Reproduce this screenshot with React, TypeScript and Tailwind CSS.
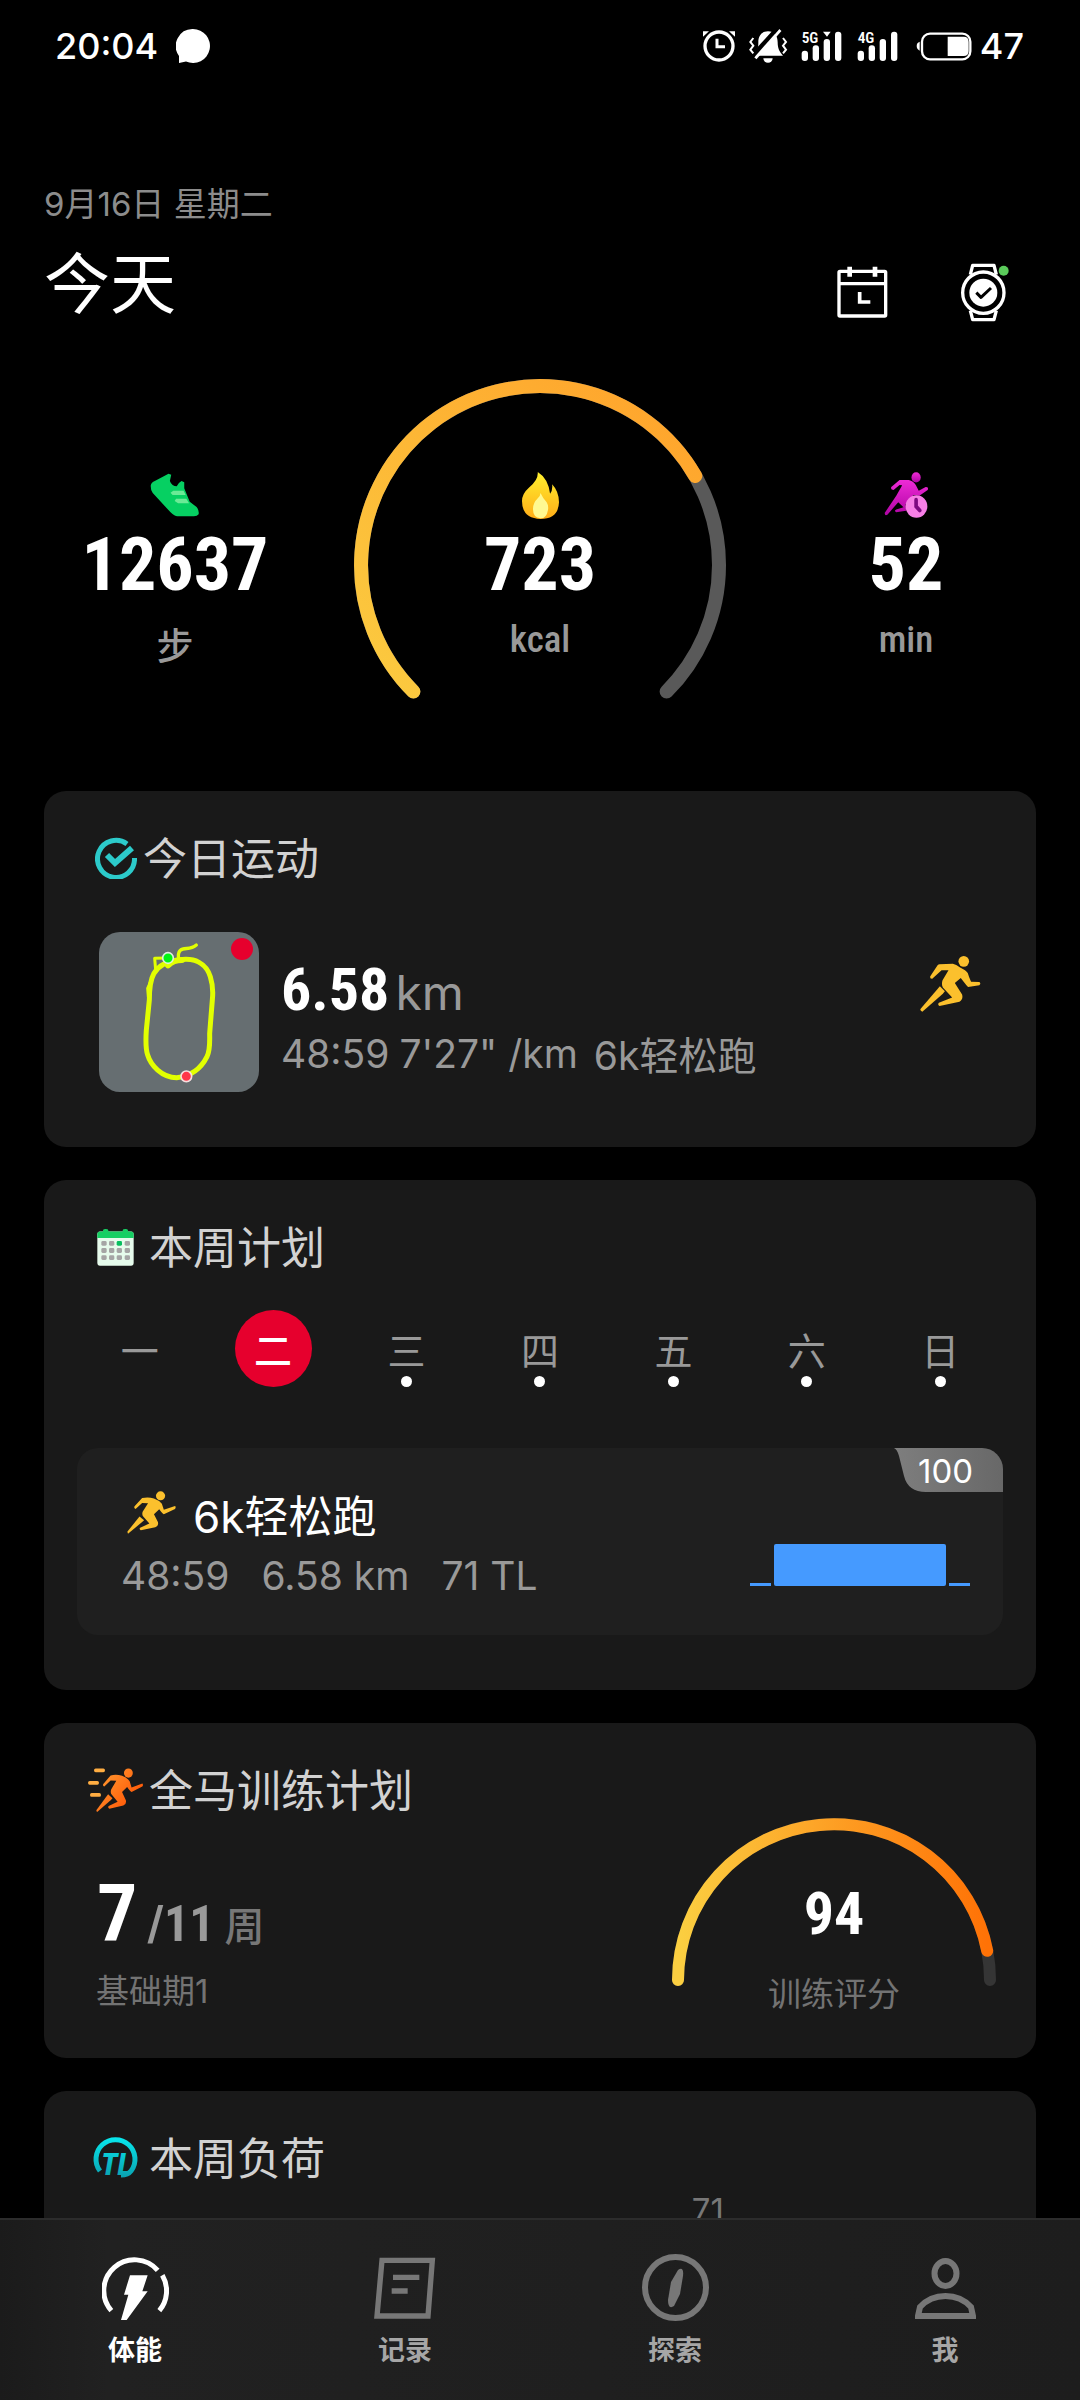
import React from 'react'

const NUM = "font-['Roboto_Condensed',Roboto,sans-serif] font-bold"

function StatusBar() {
  return (
    <div className="flex h-[92px] shrink-0 items-center justify-between pr-[56px] pl-[55px] text-[36px] leading-[48px] font-medium">
      <div className="flex items-center gap-[18px]">
        <span>20:04</span>
        <svg width="34" height="34" viewBox="0 0 34 34" fill="#fff" aria-label="消息">
          <path d="M17 0a17 17 0 1 1-7 32.500L3 34V27A17 17 0 0 1 17 0Z" />
        </svg>
      </div>
      <div className="flex items-center">
        <svg width="32" height="36" viewBox="72 52 96 108" fill="none" stroke="#fff" aria-label="闹钟">
          <circle cx="120" cy="106" r="42" strokeWidth="10" />
          <path d="M114 84V108H138" strokeWidth="9" />
          <path d="M72 78V62H90ZM168 78V62H150Z" fill="#fff" stroke="none" />
        </svg>
        <svg className="ml-[13px]" width="40" height="36" viewBox="207 52 120 108" fill="none" stroke="#fff" strokeWidth="7" aria-label="静音">
          <path d="M267 62C286 62 296 76 296 95C296 112 300 122 312 135H222C236 122 238 112 238 95C238 76 248 62 267 62Z" fill="#fff" stroke="none" />
          <path d="M253 143H281A14 13 0 0 1 253 143Z" fill="#fff" stroke="none" />
          <path d="M300 46L216 138" stroke="#000" strokeWidth="10" />
          <path d="M304 58L229 143" strokeWidth="9" />
          <path d="M297 54L222 139" stroke="#000" strokeWidth="7" />
          <path d="M223 82L214 94L223 105L214 117L223 128M312 82L321 94L312 105L321 117L312 128" strokeWidth="6" />
        </svg>
        <Signal label="5G" marker />
        <Signal label="4G" />
        <svg className="ml-[18px]" width="56" height="36" viewBox="709 52 168 108" aria-label="电量">
          <rect x="727" y="69" width="145" height="77" rx="24" fill="none" stroke="#fff" strokeWidth="7" />
          <path d="M804 78H852Q867 78 867 94V121Q867 136 852 136H804Z" fill="#fff" />
          <path d="M720 93V120Q711 116 711 106Q711 96 720 93Z" fill="#fff" />
        </svg>
        <span className="ml-2">47</span>
      </div>
    </div>
  )
}

function Signal({ label, marker }: { label: string; marker?: boolean }) {
  return (
    <svg className={marker ? 'ml-[13px]' : 'ml-[15px]'} width="41" height="36" viewBox="365 52 123 108" fill="#fff" aria-label={label + '信号'}>
      <rect x="367" y="120" width="19" height="31" rx="9" />
      <rect x="400" y="104" width="19" height="47" rx="9" />
      <rect x="433" y="85" width="19" height="66" rx="9" />
      <rect x="467" y="63" width="19" height="88" rx="9" />
      {marker && <path d="M431 63H454L443 78Z" />}
      <text x="367" y="96" fontSize="46" fontWeight="600" fontFamily="Roboto Condensed, Roboto">{label}</text>
    </svg>
  )
}

function Shoe() {
  return (
    <svg width="50" height="44" viewBox="218 338 73 132" preserveAspectRatio="none">
      <path d="M245 340L249 343L247 362Q250 378 257 378Q260 366 264 362L268 366V384L276 424L286 440Q290 450 289 462Q287 468 282 468H258Q254 468 248 456L222 398Q219 390 219 376Q220 366 225 362Z" fill="#06d062" />
      <path d="M252 391H267L270 404H251L248 397ZM256 415H271L275 429H259L254 422Z" fill="#6bea96" />
    </svg>
  )
}

function Flame() {
  return (
    <svg width="37" height="47" viewBox="758 333 54 141" preserveAspectRatio="none">
      <defs>
        <linearGradient id="flame" x1="0" y1="0" x2="0" y2="1">
          <stop offset="0" stopColor="#fff02e" />
          <stop offset="1" stopColor="#ffac18" />
        </linearGradient>
      </defs>
      <path d="M781 333Q796 352 799 398Q803 388 802 370Q812 392 812 424Q811 474 785 474Q758 472 758 420Q758 398 768 380Q782 358 781 333Z" fill="url(#flame)" />
      <path d="M785 396Q788 410 794 424Q797 434 796 446Q794 472 785 472Q774 470 774 444Q774 426 781 412Q785 404 785 396Z" fill="#fff991" />
    </svg>
  )
}

function ActiveTime() {
  return (
    <svg width="45" height="46" viewBox="71 32 136 128" preserveAspectRatio="none">
      <defs>
        <linearGradient id="active" x1="0" y1="0" x2="0" y2="1">
          <stop offset="0" stopColor="#ee2bd6" />
          <stop offset="1" stopColor="#b004a4" />
        </linearGradient>
      </defs>
      <g fill="url(#active)">
        <circle cx="168" cy="47" r="14" />
        <path d="M118 54H146Q160 57 167 68L176 84L197 74Q207 74 203 82L178 98L160 96L136 122L138 140L108 144Q100 140 108 136L130 130L114 116L82 150Q74 156 73 146L108 98L126 69L118 68L100 82Q90 82 93 74Z" />
      </g>
      <ellipse cx="169" cy="128" rx="33" ry="31" fill="#f77fe6" />
      <path d="M168 109V128L179 139" fill="none" stroke="#7d0a80" strokeWidth="11" strokeLinecap="round" />
    </svg>
  )
}

function Stat({ icon, value, unit, cjk }: { icon: React.ReactNode; value: string; unit: string; cjk?: boolean }) {
  return (
    <div className="flex flex-col items-center pt-[92px]">
      <div className="flex h-12 items-center">{icon}</div>
      <div className={`${NUM} mt-[9px] text-[74px] leading-[74px]`}>{value}</div>
      <div className={`${cjk ? 'leading-[64px]' : 'leading-[48px]'} mt-[14px] font-['Roboto_Condensed','Noto_Sans_CJK_SC',sans-serif] text-[37px] font-medium text-[#999]`}>{unit}</div>
    </div>
  )
}

function Overview() {
  return (
    <section className="grid grid-cols-[1fr_372px_1fr]">
      <div className="pr-1">
        <Stat icon={<Shoe />} value="12637" unit="步" cjk />
      </div>
      <div className="grid">
        <svg className="col-start-1 row-start-1" width="372" height="321" viewBox="0 0 372 321" fill="none" strokeWidth="14" strokeLinecap="round">
          <defs>
            <linearGradient id="ring" x1="0" y1="1" x2="1" y2="0">
              <stop offset="0" stopColor="#fbcb40" />
              <stop offset="1" stopColor="#ffa22b" />
            </linearGradient>
          </defs>
          <path d="M59.400 312.600A179 179 0 1 1 312.600 312.600" stroke="#595959" />
          <path d="M59.400 312.600A179 179 0 1 1 341.300 97" stroke="url(#ring)" />
        </svg>
        <div className="col-start-1 row-start-1">
          <Stat icon={<Flame />} value="723" unit="kcal" />
        </div>
      </div>
      <div className="pl-1.5">
        <Stat icon={<ActiveTime />} value="52" unit="min" />
      </div>
    </section>
  )
}

function CardTitle({ icon, title, tight }: { icon: React.ReactNode; title: string; tight?: boolean }) {
  return (
    <div className="flex h-[62px] items-center pl-[44px]">
      <div className="flex w-[55px] justify-center">{icon}</div>
      <h2 className={`${tight ? 'ml-0' : 'ml-[6px]'} pt-0.5 text-[44px] leading-[64px] text-[#d2d2d2]`}>{title}</h2>
    </div>
  )
}

function Card({ className = '', children }: { className?: string; children: React.ReactNode }) {
  return <section className={`rounded-[22px] bg-[#191919] ${className}`}>{children}</section>
}

function TrackMap() {
  return (
    <svg className="shrink-0 rounded-[21px] bg-[#666e71]" width="160" height="160" viewBox="57 36 480 480" fill="none" stroke="#e2ff00" strokeLinecap="round" strokeLinejoin="round" aria-label="运动轨迹">
      <path d="M296 120C345 112 378 130 391 170C398 192 400 212 397 240L389 340C389 370 391 390 381 410C366 440 340 468 290 473C245 473 212 435 203 405C196 385 197 360 199 330L208 240C208 200 212 178 222 160C238 135 262 122 296 120Z" strokeWidth="15" />
      <path d="M264 136Q280 120 306 120" strokeWidth="18" />
      <path d="M349 75C330 92 312 80 300 92Q293 100 296 118" strokeWidth="10" />
      <path d="M264 114L224 115L227 150L214 180L203 205L205 230" strokeWidth="9" />
      <circle cx="264" cy="114" r="16" fill="#00f514" stroke="#dfeedd" strokeWidth="5" />
      <circle cx="319" cy="469" r="16" fill="#ff3648" stroke="#f5dede" strokeWidth="5" />
      <circle cx="486" cy="87" r="33" fill="#e6002d" stroke="none" />
    </svg>
  )
}

function SprintRunner() {
  return (
    <svg className="mt-6 shrink-0" width="61" height="56" viewBox="181 1376 184 157" preserveAspectRatio="none" fill="#fbc02d">
      <ellipse cx="313" cy="1391" rx="16" ry="15" />
      <path d="M240 1399L280 1398Q290 1400 302 1408Q320 1416 325 1424Q328 1434 335 1448L360 1449Q366 1453 360 1458L326 1463Q320 1458 304 1438L286 1452L308 1484Q312 1498 300 1504L240 1516Q233 1512 238 1507L278 1492L250 1464Q245 1456 249 1444L267 1416H246L218 1440Q210 1440 212 1433L234 1402Q237 1399 240 1399Z" />
      <path d="M241 1461L256 1475L250 1482L188 1532Q180 1530 183 1524Z" />
    </svg>
  )
}

function RunnerShape() {
  return (
    <>
      <ellipse cx="242" cy="720" rx="14" ry="12" />
      <path d="M186 726Q204 722 222 727Q238 732 246 741L252 757L286 747Q290 750 286 755L252 769Q248 768 238 756L222 769L234 790Q237 800 226 804L182 812Q176 809 180 805L208 794L188 774Q185 768 188 762L204 740L186 739L166 755Q160 753 163 748Z" />
      <path d="M178 775L192 785L186 790L143 821L141 816Z" />
    </>
  )
}

function TodayCard() {
  return (
    <Card className="pt-9 pb-[55px]">
      <CardTitle
        tight
        title="今日运动"
        icon={
          <svg width="42" height="42" viewBox="0 0 42 42" fill="none" stroke="#2ccaca">
            <path d="M32 7A18.500 18.500 0 1 0 39.500 21" strokeWidth="5" />
            <path d="M12 18L20 26L37 11" strokeWidth="6" />
          </svg>
        }
      />
      <a href="#activity" className="mt-[43px] flex px-[55px]">
        <TrackMap />
        <div className="ml-[22px] flex-1 pt-7">
          <div className="flex h-[56px] items-baseline leading-[60px]">
            <span className={`${NUM} text-[60px]`}>6.58</span>
            <span className="ml-1.5 text-[48px] text-[#999]">km</span>
          </div>
          <div className="mt-[14px] flex items-start text-[39px] leading-[48px] text-[#999]">
            <span>48:59</span>
            <span className="ml-2.5">7'27" /km</span>
            <span className="ml-4 leading-[52px]">6k轻松跑</span>
          </div>
        </div>
        <SprintRunner />
      </a>
    </Card>
  )
}

function CalendarIcon() {
  return (
    <svg width="37" height="37" viewBox="51 17 111 99" preserveAspectRatio="none">
      <rect x="52" y="24" width="109" height="91" rx="8" fill="#e6fbec" />
      <path d="M52 41V31Q52 24 60 24H69V21Q69 17 77 17Q85 17 85 21V24H128V21Q128 17 136 17Q144 17 144 21V24H153Q161 24 161 31V41Z" fill="#17cf63" />
      {[72, 95, 118, 142].map((x) =>
        [55, 74, 93].map((y) => (
          <rect key={`${x}-${y}`} x={x - 8} y={y - 6} width="16" height="13" rx="4" fill={x === 118 && y === 55 ? '#06bf5f' : '#a5a5a5'} />
        )),
      )}
    </svg>
  )
}

const days = ['一', '二', '三', '四', '五', '六', '日']

function PlanCard() {
  return (
    <Card className="pt-9 pb-[55px]">
      <CardTitle title="本周计划" icon={<CalendarIcon />} />
      <div className="mt-8 grid grid-cols-7 px-[29px]">
        {days.map((d, i) => (
          <button
            key={d}
            className={
              i === 1
                ? 'mx-auto size-[77px] rounded-full bg-[#e6002d] text-[38px] leading-[82px] font-medium text-white'
                : 'relative mx-auto size-[77px] text-[38px] leading-[82px] text-[#999]'
            }
          >
            {d}
            {i > 1 && <span className="absolute bottom-0 left-[33px] size-[11px] rounded-full bg-white" />}
          </button>
        ))}
      </div>
      <a href="#plan" className="relative mx-[33px] mt-[61px] flex items-end justify-between overflow-hidden rounded-[21px] bg-[#1f1f1f] pr-[33px] pl-[44px]">
        <div className="pt-[43px] pb-[37px]">
          <div className="flex text-[44px] leading-[52px]">
            <svg className="mr-[17px] ml-[6px]" width="49" height="43" viewBox="140 707 149 115" preserveAspectRatio="none" fill="#fbc02d">
              <RunnerShape />
            </svg>
            6k轻松跑
          </div>
          <div className="mt-[11px] flex gap-8 text-[39px] leading-[44px] text-[#999]">
            <span>48:59</span>
            <span>6.58 km</span>
            <span>71 TL</span>
          </div>
        </div>
        <div className="flex items-end gap-[3px] pb-[49px]">
          <span className="h-[3px] w-[21px] bg-[#459aff]" />
          <span className="h-[42px] w-[172px] rounded-[2px] bg-[#459aff]" />
          <span className="h-[3px] w-[21px] bg-[#459aff]" />
        </div>
        <div className="absolute top-0 right-0 h-11 w-[109px]">
          <svg className="absolute inset-0" width="109" height="44" viewBox="0 0 109 44">
            <defs>
              <linearGradient id="badge" x1="0" y1="0" x2="1" y2="0">
                <stop offset="0" stopColor="#7e7e7e" />
                <stop offset="1" stopColor="#686868" />
              </linearGradient>
            </defs>
            <path d="M0 0H109V44H32Q14 44 10 28L5 8Q3 1 0 0Z" fill="url(#badge)" />
          </svg>
          <span className="relative block pl-6 text-[33px] leading-[46px]">100</span>
        </div>
      </a>
    </Card>
  )
}

function MarathonIcon() {
  return (
    <svg width="55" height="44" viewBox="24 1427 165 116" preserveAspectRatio="none">
      <defs>
        <linearGradient id="orange" gradientUnits="userSpaceOnUse" x1="150" y1="708" x2="260" y2="821">
          <stop offset="0" stopColor="#ffa035" />
          <stop offset="1" stopColor="#ff4d00" />
        </linearGradient>
      </defs>
      <g transform="matrix(0.952 0 0 1.02 -85.2 706)" fill="url(#orange)">
        <RunnerShape />
      </g>
      <path d="M47 1433H70M29 1466H52M35 1498H58" stroke="#ffad42" strokeWidth="10" strokeLinecap="round" />
    </svg>
  )
}

function MarathonCard() {
  return (
    <Card className="flex justify-between">
      <div className="pt-9 pb-[47px]">
        <CardTitle title="全马训练计划" icon={<MarathonIcon />} />
        <div className="mt-[53px] flex h-[80px] items-baseline pl-[53px] leading-[80px]">
          <span className={`${NUM} text-[80px]`}>7</span>
          <span className={`${NUM} ml-2.5 text-[50px] text-[#999]`}>/11</span>
          <span className="ml-2.5 text-[40px] font-medium text-[#777]">周</span>
        </div>
        <div className="mt-[17px] pl-[52px] text-[33px] leading-10 text-[#737373]">基础期1</div>
      </div>
      <div className="mr-[40px] grid content-start pt-[95px]">
        <svg className="col-start-1 row-start-1" width="324" height="168" viewBox="0 0 324 168" fill="none" strokeWidth="12" strokeLinecap="round">
          <defs>
            <linearGradient id="score" x1="0" y1="0" x2="1" y2="0">
              <stop offset="0" stopColor="#fbcf41" />
              <stop offset="0.450" stopColor="#fda427" />
              <stop offset="1" stopColor="#ff7206" />
            </linearGradient>
          </defs>
          <path d="M6 162A156 156 0 0 1 318 162" stroke="#353535" />
          <path d="M6 162A156 156 0 0 1 315.200 132.800" stroke="url(#score)" />
        </svg>
        <div className="col-start-1 row-start-1 pt-[66px] text-center">
          <div className={`${NUM} text-[60px] leading-[60px]`}>94</div>
          <div className="mt-[30px] text-[33px] leading-10 text-[#737373]">训练评分</div>
        </div>
      </div>
    </Card>
  )
}

function LoadCard() {
  return (
    <Card className="pt-9 pb-[55px]">
      <CardTitle
        title="本周负荷"
        icon={
          <svg className="overflow-visible" width="45" height="42" viewBox="0 0 45 42" fill="none">
            <defs>
              <linearGradient id="load" gradientUnits="userSpaceOnUse" x1="0" y1="0" x2="0" y2="42">
                <stop offset="0" stopColor="#08e8ee" />
                <stop offset="1" stopColor="#0a9fae" />
              </linearGradient>
            </defs>
            <path d="M7 34A19.500 19.500 0 1 1 38 34Q35 38 28 38" stroke="url(#load)" strokeWidth="5" />
            <text x="8" y="38" fontSize="31" fontWeight="800" fontStyle="italic" fontFamily="Roboto Condensed, Roboto" fill="url(#load)">TL</text>
          </svg>
        }
      />
      <div className="ml-[65%] h-[200px] pl-[3px] text-[33px] leading-[42px] text-[#777]">71</div>
    </Card>
  )
}

const tabs = [
  {
    label: '体能',
    icon: (
      <svg width="67" height="67" viewBox="126 70 201 201" fill="none" stroke="#fff" strokeWidth="15">
        <path d="M154 240A92 92 0 0 1 293 119M307 134A92 92 0 0 1 298 240" />
        <path d="M210 134H263L247 182H263L200 268H183L205 192H192Z" fill="#fff" stroke="none" />
      </svg>
    ),
  },
  {
    label: '记录',
    icon: (
      <svg width="62" height="67" viewBox="944 70 186 201" fill="none" stroke="#777" strokeWidth="16">
        <path d="M968 89H1119L1106 256H953Z" />
        <path d="M1001 140H1080M997 181H1045" />
      </svg>
    ),
  },
  {
    label: '探索',
    icon: (
      <svg width="67" height="67" viewBox="0 0 67 67" fill="none" stroke="#777" strokeWidth="6">
        <circle cx="33.500" cy="33.500" r="30.500" />
        <path d="M36 16Q42 12 41 22L38 40L32 52Q26 56 26 46L29 28Z" fill="#777" stroke="none" />
      </svg>
    ),
  },
  {
    label: '我',
    icon: (
      <svg width="61" height="67" viewBox="0 -4 61 67" fill="none" stroke="#777" strokeWidth="6">
        <ellipse cx="30.500" cy="15.500" rx="11" ry="12.500" />
        <path d="M3 58L5 49Q15 38 30.500 38Q46 38 56 49L58 58Z" />
      </svg>
    ),
  },
]

export default function App() {
  return (
    <div className="flex h-screen flex-col bg-black font-[Inter,'Noto_Sans_CJK_SC',sans-serif] text-white">
      <StatusBar />
      <main className="min-h-0 flex-1 overflow-y-auto [scrollbar-width:none]">
        <header className="px-[44px] pt-[92px]">
          <p className="text-[33px] leading-10 text-[#8c8c8c]">9月16日 星期二</p>
          <div className="mt-5 flex items-end justify-between">
            <h1 className="text-[66px] leading-[80px]">今天</h1>
            <div className="mr-[26px] flex items-center gap-[71px]">
              <button aria-label="日程">
                <svg width="52" height="64" viewBox="50 30 156 192" fill="none" stroke="#fff" strokeWidth="10">
                  <rect x="56" y="64" width="140" height="134" rx="3" />
                  <path d="M56 101H196" />
                  <path d="M88 50V80M164 50V80" strokeWidth="14" />
                  <path d="M118 126V156H150" strokeWidth="11" />
                </svg>
              </button>
              <button aria-label="手表">
                <svg width="50" height="64" viewBox="421 30 150 192" fill="none" stroke="#fff" strokeWidth="10" strokeLinejoin="round">
                  <path d="M452 74L459 46H523L530 74M452 182L459 209H523L530 182" />
                  <circle cx="491" cy="128" r="62" />
                  <circle cx="491" cy="128" r="42" fill="#fff" stroke="none" />
                  <path d="M470 128L484 142L514 114" stroke="#000" strokeWidth="9" />
                  <circle cx="552" cy="62" r="15" fill="#5bcb5b" stroke="none" />
                </svg>
              </button>
            </div>
          </div>
        </header>
        <div className="mt-[55px]">
          <Overview />
        </div>
        <div className="mt-[91px] flex flex-col gap-[33px] px-[44px]">
          <TodayCard />
          <PlanCard />
          <MarathonCard />
          <LoadCard />
        </div>
      </main>
      <nav className="grid h-[182px] shrink-0 grid-cols-4 border-t-2 border-[#2c2c2c] bg-linear-to-r from-[#1b1b1b] via-[#212121] via-10% to-[#1d1d1d]">
        {tabs.map((t, i) => (
          <button key={t.label} className="flex flex-col items-center pt-[34px]">
            {t.icon}
            <span className={`mt-3 text-[27px] leading-9 font-bold ${i === 0 ? 'text-white' : 'text-[#a6a6a6]'}`}>{t.label}</span>
          </button>
        ))}
      </nav>
    </div>
  )
}
